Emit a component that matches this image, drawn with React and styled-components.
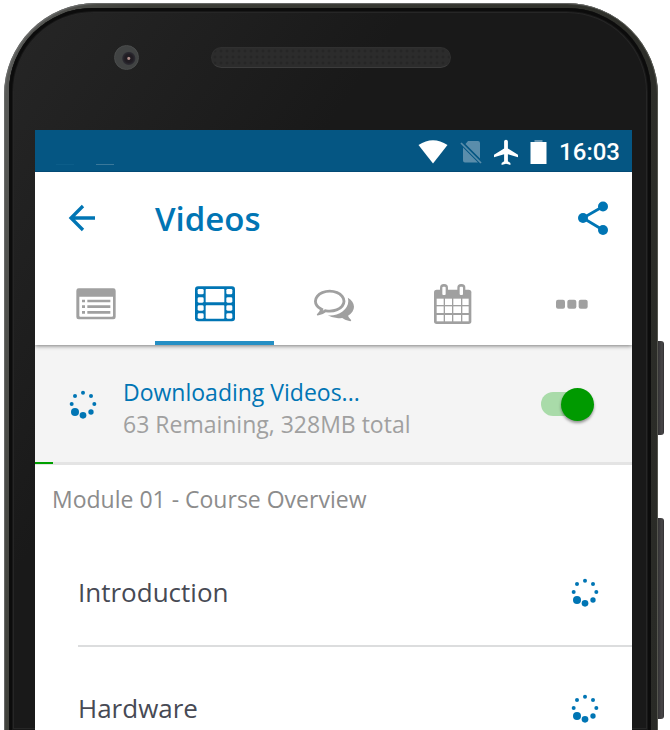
import React, { useState } from "react";
import styled, { createGlobalStyle } from "styled-components";

const color = {
  blue: "#0075b4",
  statusBar: "#055683",
  grey: "#a0a0a0",
  text: "#474a54",
  muted: "#8c8c8c",
  panel: "#f4f4f4",
  rule: "#e4e4e4",
  green: "#009a00",
};

const GlobalStyle = createGlobalStyle`
  *, *::before, *::after { box-sizing: border-box; }
  body { margin: 0; background: #fff; font-family: "Open Sans", "Noto Sans", sans-serif; }
  button { border: 0; padding: 0; background: none; font: inherit; color: inherit; cursor: pointer; }
  svg { display: block; }
`;

const Stage = styled.div`
  display: flex;
  height: 100vh;
  overflow: hidden;
  padding: 3px 6px 0 4px;
`;

const Phone = styled.div`
  flex: 1;
  min-width: 0;
  padding: 2px 7px 0 5px;
  border-radius: 92px 92px 0 0;
  background: linear-gradient(100deg, #5c5d5b 0%, #3d3e38 18%, #33342e 60%, #292a26 100%);
  box-shadow: inset 1px 1px 1px #6b6c6b, inset -1px 0 0 #55564f;
`;

const Body = styled.div`
  display: flex;
  flex-direction: column;
  height: 100%;
  margin-top: 3px;
  padding: 0 19px 0 26px;
  border-radius: 84px 84px 0 0;
  background: linear-gradient(125deg, #262626 0, #1f1f1f 180px, #191919 330px);
  box-shadow: inset 0 0 0 3px #0c0c0c, inset 0 0 0 4px #181818, inset 0 0 0 5px #262626;
`;

const TopBezel = styled.div`
  display: grid;
  grid-template-columns: 1fr 240px 1fr;
  align-items: center;
  height: 122px;
  padding: 0 6px 24px 0;
`;

const Camera = styled.div`
  width: 25px;
  height: 25px;
  margin-left: 79px;
  border-radius: 50%;
  border: 1px solid #4b4d4d;
  background: radial-gradient(circle at 60% 54%, #b08d89 0 1px, #211d23 2px 4px, #2b2a31 6px, #414343 7px);
`;

const Speaker = styled.div`
  height: 21px;
  border-radius: 11px;
  border: 1px solid #303030;
  border-bottom-color: #3c3c3c;
  background: radial-gradient(circle, #262626 1px, transparent 2px) 0 0 / 6px 6px, #2c2c2c;
`;

const SideKeys = styled.div`
  display: flex;
  flex-direction: column;
  gap: 83px;
  width: 6px;
  padding-top: 338px;
`;

const SideKey = styled.div`
  flex: none;
  height: ${(p) => (p.$long ? 201 : 94)}px;
  border-radius: 0 3px 3px 0;
  background: linear-gradient(90deg, #333234, #494749 70%, #2f2e30);
`;

const Screen = styled.main`
  flex: 1;
  background: #fff;
  overflow: hidden;
`;

const StatusBar = styled.div`
  display: flex;
  align-items: center;
  gap: 12px;
  height: 42px;
  padding: 2px 12px 0 21px;
  border-bottom: 1px solid #034a75;
  background: ${color.statusBar};
  color: #fff;
`;

const NoticeMarks = styled.div`
  display: flex;
  gap: 22px;
  margin-right: auto;
  padding-top: 25px;
`;

const NoticeMark = styled.span`
  width: 18px;
  height: 1px;
  background: ${(p) => (p.$faint ? "#0c5d89" : "#3a789a")};
`;

const Clock = styled.time`
  font: 500 24px/32px Roboto, sans-serif;
`;

const AppBar = styled.header`
  display: flex;
  align-items: center;
  height: 92px;
  padding: 0 22px 0 32px;
  color: ${color.blue};
`;

const Title = styled.h1`
  flex: 1;
  margin: 0 0 0 58px;
  padding-top: 2px;
  font-size: 33px;
  line-height: 44px;
  font-weight: 600;
`;

const TabBar = styled.nav`
  position: relative;
  display: grid;
  grid-template-columns: repeat(5, 1fr);
  height: 81px;
  padding-left: 1px;
  background: #fff;
  box-shadow: 0 1px 4px rgba(0, 0, 0, 0.5);
  clip-path: inset(0 0 -6px 0);
`;

const Tab = styled.button`
  display: flex;
  justify-content: center;
  align-items: center;
  padding-top: 3px;
  color: ${(p) => (p.$active ? color.blue : color.grey)};
  border-bottom: 4px solid ${(p) => (p.$active ? "#258fc4" : "transparent")};
`;

const DownloadPanel = styled.section`
  display: flex;
  align-items: center;
  height: 117px;
  padding: 1px 38px 0 33px;
  background: ${color.panel};
`;

const DownloadText = styled.div`
  flex: 1;
  margin-left: 25px;
  padding-top: 8px;
  font-size: 23px;
  line-height: 32px;
  white-space: nowrap;
`;

const DownloadTitle = styled.label`
  display: block;
  color: ${color.blue};
`;

const DownloadStatus = styled.div`
  color: ${color.grey};
`;

const Switch = styled.input`
  appearance: none;
  flex: none;
  display: flex;
  align-items: center;
  width: 53px;
  height: 34px;
  margin: 0;
  cursor: pointer;

  &::before {
    content: "";
    width: 47px;
    height: 24px;
    border-radius: 12px;
    background: ${(p) => (p.checked ? "#a9dba9" : "#c4c4c4")};
  }
  &::after {
    content: "";
    flex: none;
    width: 33px;
    height: 33px;
    margin-left: ${(p) => (p.checked ? "-27px" : "-47px")};
    border-radius: 50%;
    background: ${(p) => (p.checked ? color.green : "#f1f1f1")};
    box-shadow: 0 2px 3px rgba(0, 0, 0, 0.4);
  }
`;

const Progress = styled.div`
  height: 3px;
  background: ${color.rule};
`;

const ProgressFill = styled.div`
  height: 2px;
  background: #00a000;
`;

const ModuleTitle = styled.h2`
  margin: 0;
  padding: 18px 17px 0;
  font-size: 23px;
  line-height: 32px;
  font-weight: 400;
  color: ${color.muted};
`;

const VideoList = styled.ul`
  margin: 16px 0 0 43px;
  padding: 0;
  list-style: none;
`;

const VideoRow = styled.li`
  display: flex;
  align-items: center;
  justify-content: space-between;
  height: 116px;
  padding-right: 32px;
  padding-top: 8px;
  border-bottom: 2px solid #dcddde;
  font-size: 26px;
  line-height: 36px;
  color: ${color.text};
`;

/* Eight dots on a ring, growing towards the lower left. */
const spinnerDots = [
  [45, 11, 6], [69, 21, 6], [79, 45, 6], [69, 69, 8],
  [45, 79, 10], [21, 69, 12], [11, 45, 6], [21, 21, 6],
];

function Spinner() {
  return (
    <svg width="30" height="30" viewBox="0 0 90 90" fill={color.blue} role="img" aria-label="Downloading">
      {spinnerDots.map(([x, y, r]) => <circle key={`${x}-${y}`} cx={x} cy={y} r={r} />)}
    </svg>
  );
}

function WifiIcon() {
  return (
    <svg width="30" height="24" viewBox="0 0 30 24" fill="currentColor">
      <path d="M0.500 5Q15-4.500 29.500 5L15 23.500Z" />
    </svg>
  );
}

function NoSimIcon() {
  return (
    <svg width="22" height="24" viewBox="0 0 22 24">
      <path d="M8 1H18Q20 1 20 3V18.500L5.500 4Z M3 7.500L18 22.500H5Q3 22.500 3 20.500Z" fill="#5a8dab" />
      <path d="M1 3L21 23" stroke="#5a8dab" strokeWidth="1.700" />
    </svg>
  );
}

function PlaneIcon() {
  return (
    <svg width="24" height="26" viewBox="2 1.500 19 20.500" fill="currentColor">
      <path d="M21 16v-2l-8-5V3.500c0-.83-.67-1.500-1.500-1.500S10 2.670 10 3.500V9l-8 5v2l8-2.500V19l-2 1.500V22l3.500-1 3.500 1v-1.500L13 19v-5.500l8 2.500z" />
    </svg>
  );
}

function BatteryIcon() {
  return (
    <svg width="17" height="24" viewBox="0 0 17 24">
      <path d="M4.500 0H12.500V2.500H4.500Z" fill="#6c9ab5" />
      <path d="M0.500 2H16.500V24H0.500Z" fill="#fff" />
    </svg>
  );
}

function BackIcon() {
  return (
    <svg width="30" height="30" viewBox="0 0 30 30" fill="none" stroke="currentColor" strokeWidth="3.300">
      <path d="M28 15H5M16 3L4 15L16 27" />
    </svg>
  );
}

function ShareIcon() {
  return (
    <svg width="34" height="34" viewBox="0 0 34 34" fill="currentColor">
      <path d="M27 5.500L7 17L27 29" fill="none" stroke="currentColor" strokeWidth="2.800" />
      <circle cx="27" cy="5.500" r="5" />
      <circle cx="7" cy="17" r="5" />
      <circle cx="27" cy="29" r="5" />
    </svg>
  );
}

function CourseIcon() {
  return (
    <svg width="40" height="32" viewBox="0 0 120 96">
      <path fillRule="evenodd" fill="currentColor" d="M8 1H112Q119 1 119 8V87Q119 94 112 94H8Q1 94 1 87V8Q1 1 8 1ZM10 26V83Q10 86 13 86H108Q111 86 111 83V26Z" />
      <path d="M18 39H27M18 56H27M18 73H27M34 39H103M34 56H103M34 73H103" stroke="currentColor" strokeWidth="8" />
    </svg>
  );
}

function FilmIcon() {
  const holes = [9, 34, 58, 82];
  return (
    <svg width="40" height="36" viewBox="0 0 120 108">
      <rect x="0" y="1" width="120" height="105" rx="9" fill="currentColor" />
      <g fill="#fff">
        {holes.map((y) => <rect key={`l${y}`} x="8" y={y} width="18" height="16" rx="4" />)}
        {holes.map((y) => <rect key={`r${y}`} x="94" y={y} width="18" height="16" rx="4" />)}
        <rect x="32" y="9" width="56" height="40" rx="2" />
        <rect x="32" y="58" width="56" height="40" rx="2" />
      </g>
    </svg>
  );
}

function DiscussionIcon() {
  return (
    <svg width="40" height="40" viewBox="0 0 1792 1792" fill="currentColor">
      <path d="M704 384q-153 0-286 52t-211.500 141-78.500 191q0 82 53 158t149 132l97 56-35 84q34-20 62-39l44-31 53 10q78 14 153 14 153 0 286-52t211.500-141 78.500-191-78.500-191-211.500-141-286-52zm0-128q191 0 353.500 68.500t256.500 186.500 94 257-94 257-256.500 186.500-353.500 68.500q-86 0-176-16-124 88-278 128-36 9-86 16h-3q-11 0-20.500-8t-11.500-21q-1-3-1-6.500t.5-6.500 2-6l2.500-5 3.500-5.500 4-5 4.500-5 4-4.500q5-6 23-25t26-29.500 22.500-29 25-38.500 20.500-44q-124-72-195-177t-71-224q0-139 94-257t256.500-186.500 353.500-68.500zm822 1169q10 24 20.500 44t25 38.500 22.500 29 26 29.500 23 25q1 1 4 4.500t4.500 5 4 5 3.500 5.500l2.500 5 2 6 .5 6.500-1 6.500q-3 14-13 22t-22 7q-50-7-86-16-154-40-278-128-90 16-176 16-271 0-472-132 58 4 88 4 161 0 309-45t264-129q125-92 192-212t67-254q0-77-23-152 129 71 204 178t75 230q0 120-71 224.500t-195 176.500z" />
    </svg>
  );
}

function CalendarIcon() {
  const columns = [[8, 21], [33, 21], [58, 23], [85, 19]];
  const rows = [[44, 19], [67, 20], [93, 19]];
  return (
    <svg width="38" height="40" viewBox="0 0 114 120">
      <rect x="0" y="17" width="112" height="103" rx="8" fill="currentColor" />
      <g fill="#fff">
        {rows.map(([y, h]) => columns.map(([x, w]) => <rect key={`${x}-${y}`} x={x} y={y} width={w} height={h} />))}
      </g>
      {[30, 82].map((x) => (
        <g key={x}>
          <rect x={x - 12} y="0" width="24" height="39" rx="11" fill="currentColor" />
          <rect x={x - 5} y="8" width="10" height="25" rx="3" fill="#fff" />
        </g>
      ))}
    </svg>
  );
}

function MoreIcon() {
  return (
    <svg width="32" height="10" viewBox="0 0 96 30" fill="currentColor">
      <rect x="0" y="2" width="27" height="27" rx="6" />
      <rect x="34" y="2" width="27" height="27" rx="6" />
      <rect x="68" y="2" width="27" height="27" rx="6" />
    </svg>
  );
}

const tabs = [
  { label: "Course", Icon: CourseIcon },
  { label: "Videos", Icon: FilmIcon },
  { label: "Discussion", Icon: DiscussionIcon },
  { label: "Dates", Icon: CalendarIcon },
  { label: "More", Icon: MoreIcon },
];

const videos = ["Introduction", "Hardware"];

export default function App() {
  const [active, setActive] = useState("Videos");
  const [downloading, setDownloading] = useState(true);
  const progress = 3;

  return (
    <>
      <GlobalStyle />
      <Stage>
        <Phone>
          <Body>
            <TopBezel>
              <Camera />
              <Speaker />
            </TopBezel>
            <Screen>
              <StatusBar>
                <NoticeMarks>
                  <NoticeMark $faint />
                  <NoticeMark />
                </NoticeMarks>
                <WifiIcon />
                <NoSimIcon />
                <PlaneIcon />
                <BatteryIcon />
                <Clock>16:03</Clock>
              </StatusBar>
              <AppBar>
                <button aria-label="Back"><BackIcon /></button>
                <Title>Videos</Title>
                <button aria-label="Share"><ShareIcon /></button>
              </AppBar>
              <TabBar>
                {tabs.map(({ label, Icon }) => (
                  <Tab key={label} aria-label={label} $active={label === active} onClick={() => setActive(label)}>
                    <Icon />
                  </Tab>
                ))}
              </TabBar>
              <DownloadPanel>
                <Spinner />
                <DownloadText>
                  <DownloadTitle htmlFor="download-videos">Downloading Videos...</DownloadTitle>
                  <DownloadStatus>63 Remaining, 328MB total</DownloadStatus>
                </DownloadText>
                <Switch
                  id="download-videos"
                  type="checkbox"
                  role="switch"
                  checked={downloading}
                  onChange={(e) => setDownloading(e.target.checked)}
                />
              </DownloadPanel>
              <Progress>
                <ProgressFill style={{ width: `${progress}%` }} />
              </Progress>
              <ModuleTitle>Module 01 - Course Overview</ModuleTitle>
              <VideoList>
                {videos.map((name) => (
                  <VideoRow key={name}>
                    <span>{name}</span>
                    <Spinner />
                  </VideoRow>
                ))}
              </VideoList>
            </Screen>
          </Body>
        </Phone>
        <SideKeys>
          <SideKey />
          <SideKey $long />
        </SideKeys>
      </Stage>
    </>
  );
}
